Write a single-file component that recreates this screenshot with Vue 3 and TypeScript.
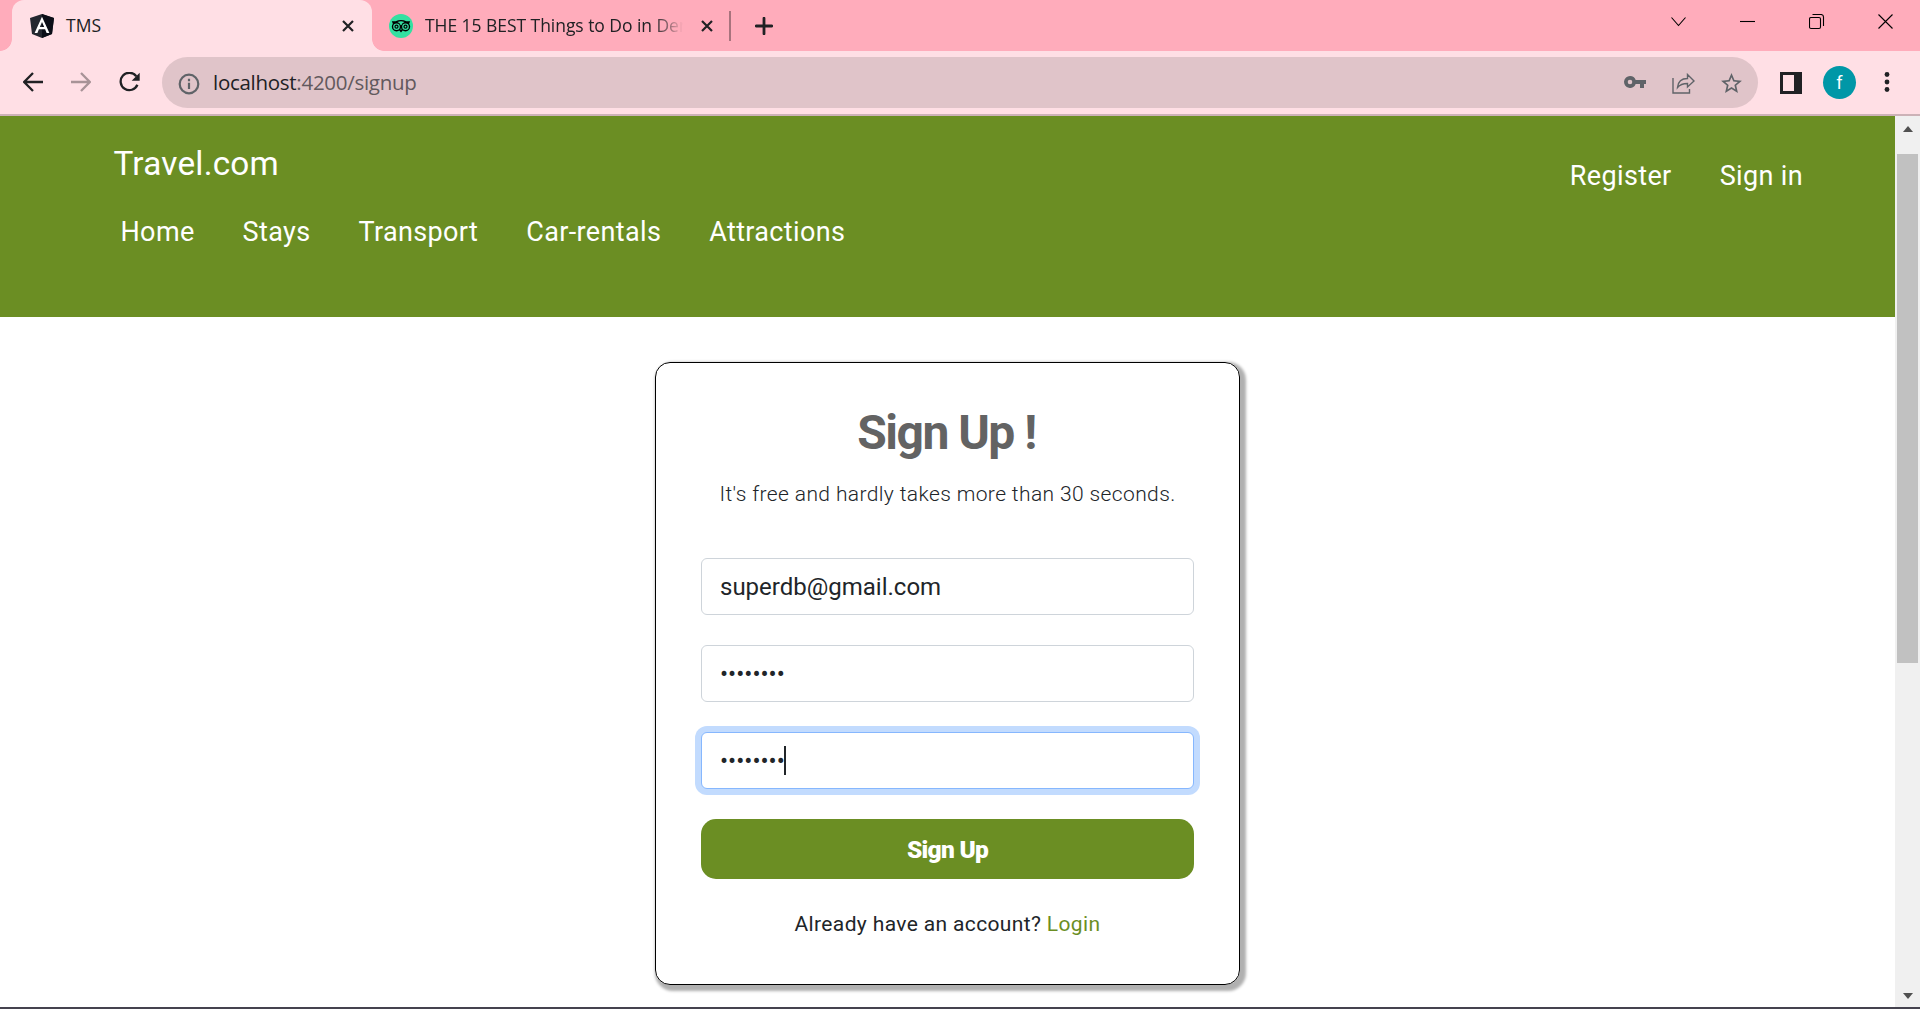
<script setup lang="ts">
import { ref } from 'vue'

const links: string[] = ['Home', 'Stays', 'Transport', 'Car-rentals', 'Attractions']
const email = ref('superdb@gmail.com')
const password = ref('password')
const confirm = ref('password')
</script>

<template>
  <div class="window">
    <div class="tabstrip">
      <div class="tab active">
        <svg class="favicon" viewBox="0 0 24 24">
          <path d="M12 0 24 4 22 20 12 24 2 20 0 4Z" fill="#23272f" />
          <path d="M12 0 24 4 22 20 12 24Z" fill="#0b0e17" />
          <path d="M12 2.7 4.6 19h2.8l1.5-3.7h6.2l1.5 3.7h2.8ZM12 8l2.2 5H9.8Z" fill="#fff" fill-rule="evenodd" />
        </svg>
        <span class="tab-title">TMS</span>
        <svg class="tab-close" viewBox="0 0 12 12"><path d="M1 1 11 11M11 1 1 11" /></svg>
      </div>
      <div class="tab idle">
        <svg class="favicon" viewBox="0 0 24 24">
          <circle cx="12" cy="12" r="12" fill="#34e0a1" />
          <path d="M2.800 7.300H6.600Q12 4.600 17.400 7.300H21.200L20 10H4Z" fill="#000" />
          <circle cx="7.500" cy="12.700" r="4.700" fill="#000" /><circle cx="16.500" cy="12.700" r="4.700" fill="#000" />
          <path d="M9.500 15.500H14.500L12 18.600Z" fill="#000" />
          <path d="M8.500 7.900Q12 6.600 15.500 7.900 12.700 9 12 11.300 11.300 9 8.500 7.900Z" fill="#34e0a1" />
          <circle cx="7.500" cy="12.700" r="3.300" fill="#34e0a1" /><circle cx="16.500" cy="12.700" r="3.300" fill="#34e0a1" />
          <circle cx="7.500" cy="12.700" r="2.100" fill="#000" /><circle cx="16.500" cy="12.700" r="2.100" fill="#000" />
          <circle cx="7.500" cy="12.700" r=".9" fill="#34e0a1" /><circle cx="16.500" cy="12.700" r=".9" fill="#34e0a1" />
        </svg>
        <span class="tab-title long">THE 15 BEST Things to Do in Den</span>
        <svg class="tab-close" viewBox="0 0 12 12"><path d="M1 1 11 11M11 1 1 11" /></svg>
      </div>
      <i class="divider"></i>
      <svg class="plus" viewBox="0 0 18 18"><path d="M9 1.200V16.800M1.200 9H16.800" /></svg>
      <div class="controls">
        <svg viewBox="0 0 16 16"><path d="M.5 3.500 7.500 11.500 14.500 3.500" /></svg>
        <svg viewBox="0 0 16 16"><path d="M0 7.500H15" /></svg>
        <svg viewBox="0 0 16 16"><rect x=".5" y="3.500" width="11" height="11" rx="1.500" /><path d="M3.500.5H12Q14.500.5 14.500 3V12" /></svg>
        <svg viewBox="0 0 16 16"><path d="M.5.5 14.500 14.500M14.500.5.5 14.500" /></svg>
      </div>
    </div>

    <div class="toolbar">
      <svg class="nav-icon" viewBox="0 0 20 20"><path d="M20 10H1.500M10 1 1.200 10 10 19" /></svg>
      <svg class="nav-icon faded" viewBox="0 0 20 20"><path d="M0 10H18.500M10 1 18.800 10 10 19" /></svg>
      <svg class="nav-icon reload" viewBox="0 0 21 20">
        <path d="M17.300 4.200A8.700 8.700 0 1 0 18.400 12.800" /><path class="solid" d="M20.700.7V8.700H12.700Z" />
      </svg>
      <div class="omnibox">
        <svg class="info" viewBox="0 0 22 22"><circle cx="11" cy="11" r="9.300" /><path d="M11 9.800V16M11 5.800V8.200" /></svg>
        <span class="url">localhost<span>:4200/signup</span></span>
        <svg class="key" viewBox="0 0 22 12">
          <path fill-rule="evenodd" d="M6 0A6 6 0 1 0 11.700 8H16V12H20V8H22V4H11.700A6 6 0 0 0 6 0ZM6 3.700A2.300 2.300 0 1 1 6 8.300 2.300 2.300 0 0 1 6 3.700Z" />
        </svg>
        <svg class="share" viewBox="0 0 23 21">
          <path d="M1 5V20H17.500V16M5.500 14.500C6 9 9 5.500 15.500 5.500V1.500L22 8 15.500 14V10.500C11 10.500 8 11.500 5.500 14.500Z" />
        </svg>
        <svg class="star" viewBox="0 0 24 24">
          <path d="M22 9.240l-7.190-.62L12 2 9.190 8.630 2 9.240l5.460 4.730L5.820 21 12 17.270 18.180 21l-1.630-7.030L22 9.240zM12 15.400l-3.760 2.270 1-4.280-3.320-2.880 4.380-.38L12 6.100l1.710 4.040 4.380.38-3.320 2.880 1 4.280L12 15.400z" />
        </svg>
      </div>
      <svg class="panel" viewBox="0 0 22 22"><path fill-rule="evenodd" d="M0 0H22V22H0ZM3 3V19H14V3Z" /></svg>
      <span class="avatar">f</span>
      <svg class="dots" viewBox="0 0 6 20"><circle cx="3" cy="2.500" r="2.400" /><circle cx="3" cy="10" r="2.400" /><circle cx="3" cy="17.500" r="2.400" /></svg>
    </div>

    <div class="viewport">
      <div class="page">
        <header>
          <div class="left">
            <a class="brand">Travel.com</a>
            <nav><a v-for="link in links" :key="link">{{ link }}</a></nav>
          </div>
          <nav class="account"><a>Register</a><a>Sign in</a></nav>
        </header>
        <main>
          <form class="card" @submit.prevent>
            <h1>Sign Up !</h1>
            <p class="lead">It's free and hardly takes more than 30 seconds.</p>
            <input v-model="email" type="text" />
            <input v-model="password" type="password" />
            <div class="field">
              <input v-model="confirm" class="focused" type="password" />
              <i class="caret"></i>
            </div>
            <button type="submit">Sign Up</button>
            <p class="login">Already have an account? <a>Login</a></p>
          </form>
        </main>
      </div>
      <div class="scrollbar">
        <i class="arrow up"></i>
        <i class="thumb"></i>
        <i class="arrow down"></i>
      </div>
    </div>
  </div>
</template>

<style>
body { margin: 0; overflow: hidden; }
</style>

<style scoped>
* { box-sizing: border-box; }
svg { display: block; flex: none; fill: none; }
.window { width: 1920px; height: 1009px; display: flex; flex-direction: column; border-bottom: 2px solid #45434f; background: #fff; font-family: Roboto, sans-serif; overflow: hidden; }

.tabstrip { height: 51px; flex: none; display: flex; background: #ffacbb; padding-left: 12px; font-family: "Open Sans", sans-serif; color: #202124; }
.tab { height: 51px; display: flex; align-items: center; position: relative; }
.tab.active { width: 360px; background: #ffdfe5; border-radius: 12px 12px 0 0; padding: 0 18px; }
.tab.active::before, .tab.active::after { content: ""; position: absolute; bottom: 0; width: 12px; height: 12px; }
.tab.active::before { left: -12px; background: radial-gradient(circle at 0 0, transparent 11.5px, #ffdfe5 12.2px); }
.tab.active::after { right: -12px; background: radial-gradient(circle at 100% 0, transparent 11.5px, #ffdfe5 12.2px); }
.tab.idle { width: 357px; padding: 0 16px 0 17px; }
.favicon { width: 24px; height: 24px; margin-top: 1px; }
.tab-title { font-size: 17.5px; line-height: 24px; margin: -1px 0 0 12px; white-space: nowrap; }
.tab-title.long { letter-spacing: -.05px; -webkit-mask-image: linear-gradient(90deg, #000 228px, transparent 258px); }
.tab-close { width: 12px; height: 12px; stroke: #202124; stroke-width: 2.2; margin-left: auto; }
.divider { width: 2px; height: 30px; margin-top: 11px; background: #a8737d; }
.plus { width: 18px; height: 18px; margin: 17px 0 0 24px; stroke: #202124; stroke-width: 2.800; stroke-linecap: round; }
.controls { margin-left: auto; display: flex; gap: 53px; padding: 14px 26px 0 0; }
.controls svg { width: 16px; height: 16px; stroke: #000; stroke-width: 1.100; }

.toolbar { height: 65px; flex: none; display: flex; align-items: center; background: #ffdfe5; border-bottom: 2px solid #ccb2b7; padding: 0 21px 0 23px; }
.nav-icon { width: 20px; height: 20px; margin: -1px 28px 0 0; stroke: #202124; stroke-width: 2.300; }
.nav-icon.faded { stroke: #a89397; }
.nav-icon.reload { width: 21px; margin-right: 22px; }
.nav-icon .solid { fill: #202124; stroke: none; }
.omnibox { width: 1596px; height: 51px; border-radius: 26px; background: #e0c4c9; display: flex; align-items: center; padding: 0 14px 0 16px; }
.info { width: 22px; height: 22px; stroke: #5f6368; stroke-width: 2.200; margin-top: 2px; }
.url { font: 20.5px/28px "Open Sans", sans-serif; letter-spacing: -.28px; color: #202124; margin: -1px 0 0 13px; flex: 1; }
.url span { color: #62595d; }
.key { width: 22px; height: 12px; fill: #5f6368; margin-top: -1px; }
.share { width: 23px; height: 21px; margin: 2px 0 0 26px; stroke: #5f6368; stroke-width: 1.400; }
.star { width: 25px; height: 25px; margin: 1px 0 0 24px; fill: #5f6368; }
.panel { width: 22px; height: 22px; margin-left: 22px; fill: #202124; margin-top: 1px; }
.avatar { width: 33px; height: 33px; border-radius: 50%; background: #0097a7; color: #fff; font-size: 18px; line-height: 33px; text-align: center; margin-left: 21px; }
.dots { width: 6px; height: 20px; fill: #202124; margin: -1px 9px 0 auto; }

.viewport { flex: 1; min-height: 0; display: flex; }
.page { width: 1895px; }
header { height: 201px; background: #6b8e23; display: flex; justify-content: space-between; color: #fff; padding: 0 92px 0 113.5px; }
.brand { display: block; font-size: 33.3px; line-height: 40px; padding-top: 28px; letter-spacing: .22px; }
nav { display: flex; gap: 48px; font-size: 27px; line-height: 36px; letter-spacing: .36px; padding: 30px 0 0 7px; }
.account { padding-top: 42px; }
main { display: flex; justify-content: center; padding-top: 45px; }
.card { width: 585px; height: 623px; border: 1px solid #000; border-radius: 15px; box-shadow: 3px 3px 3px 3px #b0b0b0; padding: 45px; display: flex; flex-direction: column; text-align: center; color: #212529; }
h1 { margin: 0; font-size: 48px; line-height: 50px; font-weight: 700; letter-spacing: -1.5px; color: #636363; padding-right: 2px; }
.lead { margin: 22px 0 50px; font-size: 21px; line-height: 28px; font-weight: 300; letter-spacing: .38px; white-space: nowrap; }
input { display: block; width: 100%; height: 57px; flex: none; border: 1px solid #ced4da; border-radius: 6px; padding: 0 18px; margin: 0 0 30px; font: 24px/36px Roboto, sans-serif; color: #212529; background: #fff; outline: none; }
.field { position: relative; }
.focused { border-color: #86b7fe; box-shadow: 0 0 0 6px #c2dbfe; }
.caret { position: absolute; left: 83px; top: 14px; width: 2px; height: 29px; background: #212529; }
button { height: 60px; border: 0; border-radius: 15px; background: #6b8e23; color: #fff; font: 900 24.5px/58px Roboto, sans-serif; letter-spacing: -.75px; padding: 2px 0 0; }
.login { margin: 31px 0 0; font-size: 21px; line-height: 28px; letter-spacing: .36px; }
.login a { color: #6b8e23; }
.scrollbar { width: 25px; background: #f0f0f0; display: flex; flex-direction: column; align-items: center; }
.arrow { width: 0; border: 5.500px solid transparent; }
.arrow.up { border-top: 0; border-bottom: 6px solid #505050; margin-top: 10px; }
.arrow.down { border-bottom: 0; border-top: 6px solid #505050; margin: auto 0 8px; }
.thumb { width: 21px; height: 509px; background: #c1c1c1; margin-top: 22px; }
</style>
